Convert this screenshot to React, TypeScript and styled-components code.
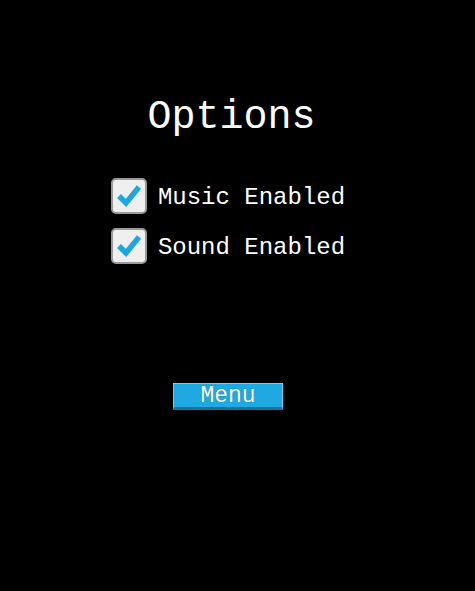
import React from "react";
import styled, { createGlobalStyle } from "styled-components";

const Global = createGlobalStyle`
  html, body { margin: 0; padding: 0; background: #000; }
  body { font-family: "Liberation Mono", "Courier New", monospace; }
`;

const Screen = styled.div`
  width: 456px;
  height: 591px;
  background: #000;
  display: flex;
  flex-direction: column;
  align-items: center;
`;

const Title = styled.h1`
  margin: 95px 0 0 7px;
  font-family: "Liberation Mono", "Courier New", monospace;
  font-weight: normal;
  font-size: 40px;
  line-height: 46px;
  color: #fff;
`;

const OptionList = styled.div`
  margin-top: 37px;
  display: flex;
  flex-direction: column;
  gap: 14px;
`;

const Row = styled.label`
  display: flex;
  align-items: center;
  gap: 11px;
  color: #fff;
  font-size: 24px;
  cursor: pointer;
`;

const Box = styled.span`
  width: 32px;
  height: 32px;
  border: 2px solid #9a9a9a;
  border-radius: 5px;
  background: #efefef;
  display: flex;
  align-items: center;
  justify-content: center;
  box-sizing: content-box;
`;

const Label = styled.span`
  line-height: 28px;
  padding-top: 3px;
`;

const MenuButton = styled.button`
  margin-top: 119px;
  width: 110px;
  height: 27px;
  box-sizing: border-box;
  padding: 2px 0 0;
  background: #1fa9e2;
  border-top: 1px solid #6cd0f5;
  border-left: 1px solid #6cd0f5;
  border-right: 1px solid #6cd0f5;
  border-bottom: 3px solid #17739a;
  color: #fff;
  font-family: "Liberation Mono", "Courier New", monospace;
  font-size: 23px;
  line-height: 21px;
  text-shadow: 0 0 1px rgba(0, 0, 0, 0.4);
  cursor: pointer;
`;

const Check = () => (
  <svg width="26" height="24" viewBox="0 0 26 24">
    <path
      d="M3 12 L10 19 L23 3"
      fill="none"
      stroke="#1ea6e0"
      strokeWidth="5.5"
      strokeLinejoin="miter"
    />
  </svg>
);

const Option = ({ label }: { label: string }) => (
  <Row>
    <Box>
      <Check />
    </Box>
    <Label>{label}</Label>
  </Row>
);

export default function App() {
  return (
    <>
      <Global />
      <Screen>
        <Title>Options</Title>
        <OptionList>
          <Option label="Music Enabled" />
          <Option label="Sound Enabled" />
        </OptionList>
        <MenuButton>Menu</MenuButton>
      </Screen>
    </>
  );
}
